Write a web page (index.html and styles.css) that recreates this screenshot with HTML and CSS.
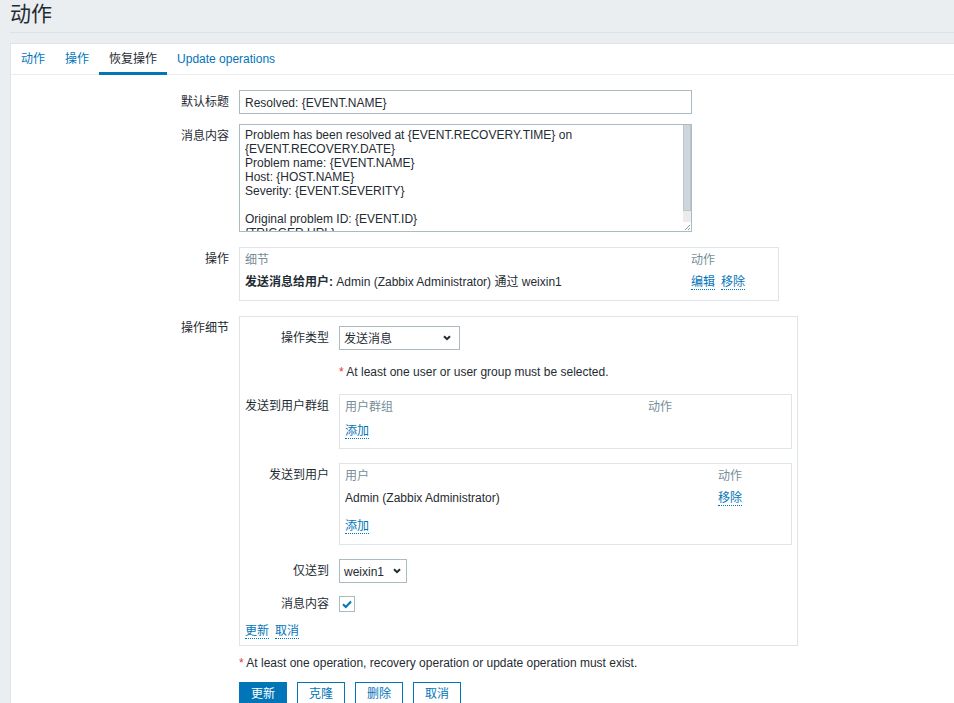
FILE: index.html
```html
<!DOCTYPE html>
<html lang="zh-CN">
<head>
<meta charset="utf-8">
<title>动作</title>
<link rel="stylesheet" href="styles.css">
</head>
<body>
<div class="page">
  <header class="header"><h1>动作</h1></header>
  <main class="panel">
    <nav class="tabs">
      <span class="tab">动作</span>
      <span class="tab">操作</span>
      <span class="tab active">恢复操作</span>
      <span class="tab">Update operations</span>
    </nav>
    <form class="form">
      <div class="row r1">
        <div class="lbl">默认标题</div>
        <div class="fld"><input class="text-input" type="text" value="Resolved: {EVENT.NAME}"></div>
      </div>
      <div class="row r2">
        <div class="lbl">消息内容</div>
        <div class="fld">
          <div class="ta-wrap">
            <textarea class="textarea">Problem has been resolved at {EVENT.RECOVERY.TIME} on {EVENT.RECOVERY.DATE}
Problem name: {EVENT.NAME}
Host: {HOST.NAME}
Severity: {EVENT.SEVERITY}

Original problem ID: {EVENT.ID}
{TRIGGER.URL}</textarea>
            <div class="sb">
              <div class="sb-thumb"></div>
              <div class="sb-track"></div>
              <div class="sb-corner"><svg width="8" height="8" viewBox="0 0 8 8"><path d="M7 2 L2 7 M7 5 L5 7" stroke="#8a9aa3" stroke-width="1" fill="none"/></svg></div>
            </div>
          </div>
        </div>
      </div>
      <div class="row r3">
        <div class="lbl">操作</div>
        <div class="fld">
          <div class="tbl tbl-ops">
            <div class="tr th"><span>细节</span><span>动作</span></div>
            <div class="tr"><span><b>发送消息给用户:</b> Admin (Zabbix Administrator) 通过 weixin1</span><span class="links"><a class="link">编辑</a><a class="link">移除</a></span></div>
          </div>
        </div>
      </div>
      <div class="row r4">
        <div class="lbl">操作细节</div>
        <div class="fld">
          <div class="box">
            <div class="irow ia">
              <div class="ilbl">操作类型</div>
              <div class="ifld">
                <div class="select sel-type"><span>发送消息</span><svg width="8" height="6" viewBox="0 0 8 6"><path d="M1 1.2 L4 4.2 L7 1.2" fill="none" stroke="#1f2c33" stroke-width="2"/></svg></div>
              </div>
            </div>
            <div class="irow ib">
              <div class="ilbl"></div>
              <div class="ifld"><span class="req">*</span> At least one user or user group must be selected.</div>
            </div>
            <div class="irow ic">
              <div class="ilbl">发送到用户群组</div>
              <div class="ifld">
                <div class="tbl tbl-grp">
                  <div class="tr th"><span>用户群组</span><span>动作</span></div>
                  <div class="tr tf"><span><a class="link">添加</a></span></div>
                </div>
              </div>
            </div>
            <div class="irow id">
              <div class="ilbl">发送到用户</div>
              <div class="ifld">
                <div class="tbl tbl-usr">
                  <div class="tr th"><span>用户</span><span>动作</span></div>
                  <div class="tr"><span>Admin (Zabbix Administrator)</span><span><a class="link">移除</a></span></div>
                  <div class="tr tf"><span><a class="link">添加</a></span></div>
                </div>
              </div>
            </div>
            <div class="irow ie">
              <div class="ilbl">仅送到</div>
              <div class="ifld">
                <div class="select sel-media"><span>weixin1</span><svg width="8" height="6" viewBox="0 0 8 6"><path d="M1 1.2 L4 4.2 L7 1.2" fill="none" stroke="#1f2c33" stroke-width="2"/></svg></div>
              </div>
            </div>
            <div class="irow if">
              <div class="ilbl">消息内容</div>
              <div class="ifld">
                <span class="cb"><svg width="14" height="14" viewBox="0 0 14 14"><path d="M3 7.2 L5.8 10 L11 4.5" fill="none" stroke="#0275b8" stroke-width="2"/></svg></span>
              </div>
            </div>
            <div class="links box-links"><a class="link">更新</a><a class="link">取消</a></div>
          </div>
        </div>
      </div>
      <div class="row r5">
        <div class="lbl"></div>
        <div class="fld"><span class="req">*</span> At least one operation, recovery operation or update operation must exist.</div>
      </div>
      <div class="row r6">
        <div class="lbl"></div>
        <div class="fld buttons">
          <button type="button" class="btn primary">更新</button>
          <button type="button" class="btn">克隆</button>
          <button type="button" class="btn">删除</button>
          <button type="button" class="btn">取消</button>
        </div>
      </div>
    </form>
  </main>
</div>
</body>
</html>
```
FILE: styles.css
```css
* { box-sizing: border-box; }
html, body { margin: 0; padding: 0; }
body {
  background: #ebeef0;
  color: #1f2c33;
  font-family: "Liberation Sans", Arial, "Noto Sans CJK SC", sans-serif;
  font-size: 12px;
  line-height: 14px;
  overflow: hidden;
  height: 703px;
}
.page { padding-left: 10px; }
.header {
  height: 33px;
  border-bottom: 1px solid #dce2e5;
}
.header h1 {
  margin: 0;
  font-size: 21px;
  font-weight: normal;
  line-height: 28px;
}
.panel {
  margin-top: 10px;
  background: #fff;
  border: 1px solid #dfe4e7;
  border-right: 0;
  min-height: 800px;
}
.tabs {
  display: flex;
  height: 31px;
  border-bottom: 1px solid #ebeef0;
}
.tab {
  height: 31px;
  padding: 8px 10px 0;
  margin-bottom: -1px;
  border-bottom: 3px solid transparent;
  color: #0275b8;
}
.tab.active {
  color: #1f2c33;
  border-bottom-color: #0275b8;
}
.form { padding-top: 15px; }
.row { display: flex; align-items: flex-start; }
.lbl {
  flex: none;
  width: 218px;
  padding-top: 5px;
  text-align: right;
}
.fld { margin-left: 10px; }
.r1 { margin-bottom: 10px; }
.r2 { margin-bottom: 15px; }
.r3 { margin-bottom: 15px; }
.r4 { margin-bottom: 10px; }
.r5 { margin-bottom: 12px; }
.r5 .lbl { padding-top: 0; }

.text-input {
  display: block;
  width: 453px;
  height: 24px;
  border: 1px solid #acbbc2;
  padding: 1px 5px 0;
  font: inherit;
  color: inherit;
  line-height: 21px;
  outline: none;
}

.ta-wrap {
  display: flex;
  width: 453px;
  height: 108px;
  border: 1px solid #acbbc2;
  background: #fff;
}
.textarea {
  flex: 1;
  min-width: 0;
  height: 106px;
  border: 0;
  padding: 3px 5px 2px;
  margin: 0;
  font: inherit;
  color: inherit;
  line-height: 14px;
  resize: none;
  overflow: hidden;
  outline: none;
}
.sb {
  flex: none;
  width: 8px;
  display: flex;
  flex-direction: column;
}
.sb-thumb {
  height: 86px;
  background: #cdd6db;
  border: 1px solid #bac7cd;
  border-top: 0;
}
.sb-track { flex: 1; background: #ebebeb; }
.sb-corner {
  height: 9px;
  display: flex;
  align-items: flex-end;
  background: #fff;
}

.tbl {
  border: 1px solid #dfe4e7;
  padding: 0 5px 8px;
}
.tr {
  display: grid;
  line-height: 20px;
  padding-top: 2px;
  white-space: nowrap;
}
.th { color: #768d99; }
.tbl-ops { width: 540px; }
.tbl-ops .tr { grid-template-columns: 446px 1fr; }
.tbl-grp { width: 453px; padding-bottom: 7px; }
.tbl-grp .tr { grid-template-columns: 303px 1fr; }
.tbl-grp .tf { margin-top: 2px; }
.tbl-usr { width: 453px; }
.tbl-usr .tr { grid-template-columns: 373px 1fr; }
.tbl-usr .th { padding-top: 3px; line-height: 19px; }
.tbl-usr .tf { margin-top: 6px; }

.links { display: flex; gap: 6px; }
.tr .links { display: block; }
.tr .links .link { margin-right: 6px; }
.link {
  color: #0275b8;
  text-decoration: none;
  border-bottom: 1px dotted #0275b8;
  cursor: pointer;
}

.box {
  width: 559px;
  border: 1px solid #dfe4e7;
  padding: 9px 5px 6px;
}
.irow { display: flex; align-items: flex-start; }
.ilbl {
  flex: none;
  width: 84px;
  padding-top: 5px;
  text-align: right;
  white-space: nowrap;
}
.ifld { margin-left: 10px; }
.ia { margin-bottom: 14px; }
.ib { margin-bottom: 15px; }
.ib .ilbl { padding-top: 0; }
.ib .ifld { padding-top: 1px; }
.ic { margin-bottom: 14px; }
.id { margin-bottom: 14px; }
.ie { margin-bottom: 13px; }
.if { margin-bottom: 12px; align-items: center; height: 16px; }
.if .ilbl { padding-top: 1px; line-height: 15px; }
.if .ifld { display: flex; }

.select {
  display: flex;
  align-items: center;
  justify-content: space-between;
  height: 24px;
  border: 1px solid #acbbc2;
  background: #fff;
  padding: 2px 8px 0 4px;
}
.select svg { margin-top: -2px; }
.sel-type { width: 121px; }
.sel-media { width: 68px; padding-right: 5px; }

.cb {
  display: flex;
  align-items: center;
  justify-content: center;
  width: 16px;
  height: 16px;
  border: 1px solid #acbbc2;
  background: #fff;
}

.req { color: #e33734; }

.buttons { display: flex; gap: 10px; }
.btn {
  height: 24px;
  padding: 1px 11px 0;
  border: 1px solid #0275b8;
  background: #fff;
  color: #0275b8;
  font: inherit;
  line-height: 21px;
  border-radius: 0;
  margin: 0;
}
.btn.primary {
  background: #0275b8;
  color: #fff;
}
```
